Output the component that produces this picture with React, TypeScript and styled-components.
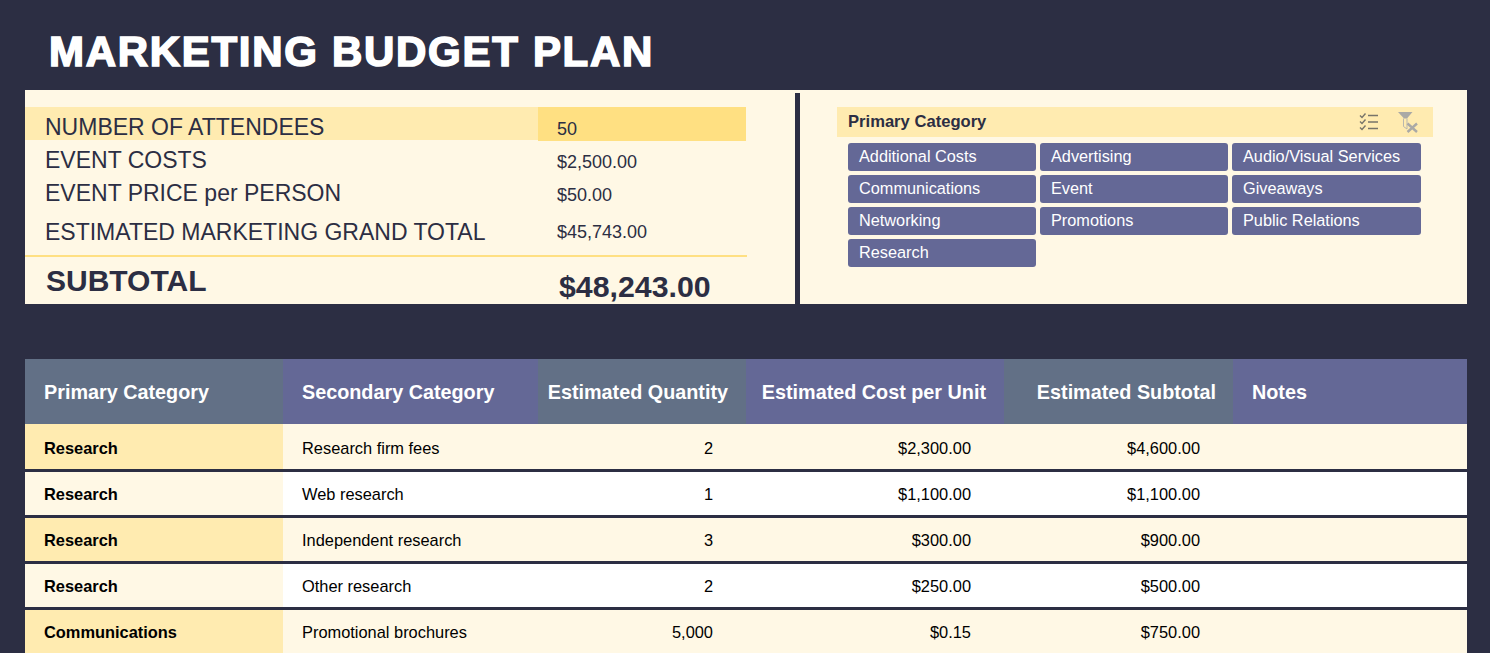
import React from "react";
import styled, { createGlobalStyle } from "styled-components";

const Global = createGlobalStyle`
  html, body { margin: 0; padding: 0; height: 653px; overflow: hidden; background: #2c2e43; }
  body { font-family: "Liberation Sans", Arial, sans-serif; }
`;
const Page = styled.div`
  width: 1490px;
  height: 653px;
  overflow: hidden;
  padding: 0 23px 0 25px;
  box-sizing: border-box;
`;
const Title = styled.h1`
  margin: 0;
  height: 90px;
  padding: 28px 0 0 24px;
  box-sizing: border-box;
  font-size: 42px;
  line-height: 48px;
  font-weight: 700;
  color: #fff;
  letter-spacing: 1.7px;
  -webkit-text-stroke: 1.6px #fff;
`;
const TopPanels = styled.section`
  display: grid;
  grid-template-columns: 770px 5px 1fr;
  height: 214px;
  margin-bottom: 55px;
  background: #fff8e5;
`;
const Divider = styled.div`
  background: #2c2e43;
  margin-top: 3px;
`;
const Summary = styled.div`
  padding-top: 17px;
  color: #2c2e43;
`;
const SummaryRow = styled.div<{ $h: number; $tan?: boolean; $rule?: boolean }>`
  display: grid;
  grid-template-columns: 513px 208px;
  width: ${(p) => (p.$rule ? 722 : 721)}px;
  height: ${(p) => p.$h}px;
  background: ${(p) => (p.$tan ? "#ffebb0" : "transparent")};
  ${(p) => (p.$rule ? "border-top: 2px solid #ffe082;" : "")}
  box-sizing: border-box;
`;
const SummaryLabel = styled.div<{ $strong?: boolean; $top: number }>`
  padding: ${(p) => p.$top}px 0 0 ${(p) => (p.$strong ? 21 : 20)}px;
  font-size: ${(p) => (p.$strong ? 30 : 23)}px;
  font-weight: ${(p) => (p.$strong ? 700 : 400)};
  line-height: 28px;
  white-space: nowrap;
`;
const SummaryValue = styled.div<{ $strong?: boolean; $hl?: boolean; $top: number }>`
  padding: ${(p) => p.$top}px 0 0 ${(p) => (p.$strong ? 21 : 19)}px;
  font-size: ${(p) => (p.$strong ? 30.3 : 18)}px;
  font-weight: ${(p) => (p.$strong ? 700 : 400)};
  line-height: 20px;
  white-space: nowrap;
  background: ${(p) => (p.$hl ? "#ffe082" : "transparent")};
`;
const Slicer = styled.div`
  padding: 17px 34px 0 37px;
`;
const SlicerHead = styled.div`
  display: flex;
  align-items: center;
  justify-content: space-between;
  height: 30px;
  background: #ffebb0;
  padding: 0 14px 0 11px;
  font-size: 16.6px;
  font-weight: 700;
  color: #2c2e43;
`;
const SlicerIcons = styled.div`
  display: flex;
  align-items: center;
  gap: 18px;
`;
const Chips = styled.div`
  display: grid;
  grid-template-columns: 188px 188px 189px;
  grid-auto-rows: 28px;
  gap: 4px;
  padding: 6px 0 0 11px;
`;
const Chip = styled.div`
  background: #646896;
  border-radius: 3px;
  color: #fff;
  font-size: 16.3px;
  line-height: 27px;
  padding-left: 11px;
  white-space: nowrap;
`;
const Grid = `
  display: grid;
  grid-template-columns: 258px 255px 208px 258px 229px 234px;
  grid-template-rows: minmax(0, 1fr);
`;
const HeadRow = styled.div`
  ${Grid}
  height: 65px;
`;
const HeadCell = styled.div<{ $alt?: boolean; $pad: string; $right?: boolean }>`
  background: ${(p) => (p.$alt ? "#627086" : "#646896")};
  color: #fff;
  font-size: 19.8px;
  font-weight: 700;
  line-height: 67px;
  padding: ${(p) => p.$pad};
  text-align: ${(p) => (p.$right ? "right" : "left")};
  white-space: nowrap;
`;
const BodyRow = styled.div<{ $even: boolean; $first?: boolean }>`
  ${Grid}
  height: ${(p) => (p.$first ? 45 : 43)}px;
  margin-bottom: 3px;
  background: ${(p) => (p.$even ? "#fff" : "#fff8e5")};
  color: #000;
  font-size: 16.4px;
  --cell-top: ${(p) => (p.$first ? 3 : 1)}px;
`;
const Cell = styled.div<{ $right?: number }>`
  display: flex;
  align-items: center;
  justify-content: ${(p) => (p.$right ? "flex-end" : "flex-start")};
  box-sizing: border-box;
  padding: var(--cell-top) ${(p) => (p.$right ? `${p.$right}px` : "0")} 0 ${(p) => (p.$right ? "0" : "19px")};
  white-space: nowrap;
`;
const CategoryCell = styled(Cell)<{ $even: boolean }>`
  background: ${(p) => (p.$even ? "#fff8e5" : "#ffebb0")};
  font-weight: 700;
`;

const summary = [
  { label: "NUMBER OF ATTENDEES", value: "50", h: 33, lt: 6, vt: 12, tan: true, hl: true },
  { label: "EVENT COSTS", value: "$2,500.00", h: 33, lt: 6, vt: 12 },
  { label: "EVENT PRICE per PERSON", value: "$50.00", h: 38, lt: 6, vt: 12 },
  { label: "ESTIMATED MARKETING GRAND TOTAL", value: "$45,743.00", h: 44, lt: 7, vt: 11 },
];
const categories = [
  "Additional Costs", "Advertising", "Audio/Visual Services",
  "Communications", "Event", "Giveaways",
  "Networking", "Promotions", "Public Relations",
  "Research",
];
const rows = [
  ["Research", "Research firm fees", "2", "$2,300.00", "$4,600.00"],
  ["Research", "Web research", "1", "$1,100.00", "$1,100.00"],
  ["Research", "Independent research", "3", "$300.00", "$900.00"],
  ["Research", "Other research", "2", "$250.00", "$500.00"],
  ["Communications", "Promotional brochures", "5,000", "$0.15", "$750.00"],
];

const MultiSelectIcon = () => (
  <svg width="20" height="20" viewBox="0 0 20 20" fill="none" stroke="#77746a" strokeWidth="1.4">
    <path d="M1 3.5l2 2 3.5-4M1 9.5l2 2 3.5-4M1 15.5l2 2 3.5-4" />
    <path d="M9 3.5h10M9 10h10M9 16.5h10" />
  </svg>
);
const ClearFilterIcon = () => (
  <svg width="22" height="22" viewBox="0 0 22 22" fill="none">
    <path d="M1 1h14.5L10 7.5H7z" fill="#aaa9a6" />
    <path d="M6.5 7.5v8l3.5 2.5V7.5" stroke="#b9b7ae" strokeWidth="1" />
    <path d="M10.5 12.5l9.5 8.5M20 12.5l-9.5 8.5" stroke="#aaa9a6" strokeWidth="2.4" />
  </svg>
);

export default function App() {
  return (
    <Page>
      <Global />
      <Title>MARKETING BUDGET PLAN</Title>
      <TopPanels>
        <Summary>
          {summary.map((s) => (
            <SummaryRow key={s.label} $h={s.h} $tan={s.tan}>
              <SummaryLabel $top={s.lt}>{s.label}</SummaryLabel>
              <SummaryValue $top={s.vt} $hl={s.hl}>{s.value}</SummaryValue>
            </SummaryRow>
          ))}
          <SummaryRow $h={49} $rule>
            <SummaryLabel $strong $top={10}>SUBTOTAL</SummaryLabel>
            <SummaryValue $strong $top={20}>$48,243.00</SummaryValue>
          </SummaryRow>
        </Summary>
        <Divider />
        <Slicer>
          <SlicerHead>
            Primary Category
            <SlicerIcons>
              <MultiSelectIcon />
              <ClearFilterIcon />
            </SlicerIcons>
          </SlicerHead>
          <Chips>
            {categories.map((c) => (
              <Chip key={c}>{c}</Chip>
            ))}
          </Chips>
        </Slicer>
      </TopPanels>
      <HeadRow>
        <HeadCell $alt $pad="0 0 0 19px">Primary Category</HeadCell>
        <HeadCell $pad="0 0 0 19px">Secondary Category</HeadCell>
        <HeadCell $alt $pad="0 18px 0 0" $right>Estimated Quantity</HeadCell>
        <HeadCell $pad="0 18px 0 0" $right>Estimated Cost per Unit</HeadCell>
        <HeadCell $alt $pad="0 17px 0 0" $right>Estimated Subtotal</HeadCell>
        <HeadCell $pad="0 0 0 19px">Notes</HeadCell>
      </HeadRow>
      {rows.map((r, i) => (
        <BodyRow key={r[1]} $even={i % 2 === 1} $first={i === 0}>
          <CategoryCell $even={i % 2 === 1}>{r[0]}</CategoryCell>
          <Cell>{r[1]}</Cell>
          <Cell $right={33}>{r[2]}</Cell>
          <Cell $right={33}>{r[3]}</Cell>
          <Cell $right={33}>{r[4]}</Cell>
          <Cell />
        </BodyRow>
      ))}
    </Page>
  );
}
